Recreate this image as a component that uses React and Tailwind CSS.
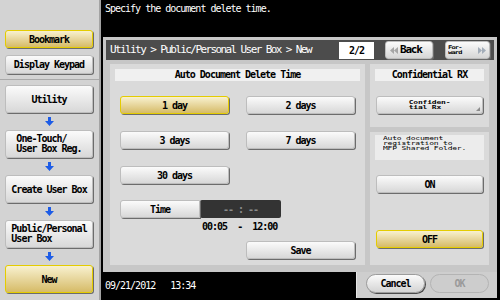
const yellowCls = "border border-[#e4cc00] bg-linear-to-b from-[#f8f1cf] to-[#d6bb66]";
const greyCls = "border border-[#bdbdbd] bg-linear-to-b from-[#fbfbfb] to-[#d8d8d8]";

function Btn({ children, className = "", yellow = false }) {
  return (
    <div
      className={`relative flex items-center justify-center rounded-[3px] font-bold text-black shadow-[1px_1px_0_#6c6c6c] ${
        yellow ? yellowCls : greyCls
      } ${className}`}
    >
      {children}
    </div>
  );
}

function DownArrow() {
  return (
    <div className="flex h-[17px] items-center justify-center">
      <svg width="9" height="9" viewBox="0 0 9 9">
        <path d="M3 0h3v4h3L4.5 9 0 4h3z" fill="#1d5ce6" />
      </svg>
    </div>
  );
}

function DoubleTri({ dir = "left", color }) {
  const d =
    dir === "left"
      ? "M0 3.5 4 0v7zM4 3.5 8 0v7z"
      : "M8 3.5 4 0v7zM4 3.5 0 0v7z";
  return (
    <svg width="8" height="7" viewBox="0 0 8 7">
      <path d={d} fill={color} />
    </svg>
  );
}

function Squashed({ children, className = "" }) {
  return (
    <span className={`inline-block origin-center scale-y-[0.72] whitespace-pre text-left ${className}`}>
      {children}
    </span>
  );
}

export default function App() {
  return (
    <div className="flex h-[300px] w-[500px] overflow-hidden font-['DejaVu_Sans_Mono',monospace] text-[10px] tracking-[-1px] text-black">
      {/* left column */}
      <div className="flex h-full w-[101px] flex-col border-r-2 border-[#a3a3a3] bg-[#d3d3d3]">
        <div className="flex h-[80px] flex-col gap-[7px] border-b border-[#a9a9a9] pl-[5px] pr-[6px] pt-[30px]">
          <Btn yellow className="h-[18px]">Bookmark</Btn>
          <Btn className="h-[19px]">Display Keypad</Btn>
        </div>
        <div className="flex flex-col pl-[5px] pr-[6px] pt-[5px]">
          <Btn className="h-[28px]">Utility</Btn>
          <DownArrow />
          <Btn className="h-[28px] leading-[10px]">
            <span className="inline-block text-left">One-Touch/<br />User Box Reg.</span>
          </Btn>
          <DownArrow />
          <Btn className="h-[28px]">Create User Box</Btn>
          <DownArrow />
          <Btn className="h-[28px] leading-[10px]">
            <span className="inline-block text-left">Public/Personal<br />User Box</span>
          </Btn>
          <DownArrow />
          <Btn yellow className="h-[28px]">New</Btn>
        </div>
      </div>

      {/* main */}
      <div className="flex flex-1 flex-col bg-black">
        <div className="h-[37px] pl-[4px] pt-[3px] leading-[12px] text-white">
          Specify the document delete time.
        </div>

        <div className="ml-[2px] mr-[3px] flex h-[235px] flex-col bg-[#c7c7c7] p-[3px]">
          {/* header */}
          <div className="flex h-[20px] items-center bg-[#4c4c4c] pr-[4px]">
            <div className="flex-1 pl-[4px] text-[11px] tracking-[-1.6px] text-white">
              Utility &gt; Public/Personal User Box &gt; New
            </div>
            <div className="flex h-[17px] w-[35px] items-center justify-center bg-white font-bold">2/2</div>
            <div className="ml-[11px] flex h-[18px] w-[48px] items-center gap-[2px] rounded-[3px] border border-[#bdbdbd] bg-linear-to-b from-[#fbfbfb] to-[#d6d6d6] pl-[4px] text-[11px] font-bold tracking-[-1.2px] shadow-[1px_1px_0_#6c6c6c]">
              <DoubleTri dir="left" color="#a6a6a6" />
              Back
            </div>
            <div className="ml-[12px] flex h-[18px] w-[45px] items-center justify-between rounded-[3px] border border-[#bdbdbd] bg-linear-to-b from-[#fbfbfb] to-[#d6d6d6] pl-[2px] pr-[3px] shadow-[1px_1px_0_#6c6c6c]">
              <Squashed className="text-[7px] leading-[6px] tracking-[-0.8px] font-bold">{"For-\nward"}</Squashed>
              <DoubleTri dir="right" color="#a3adb9" />
            </div>
          </div>

          {/* body */}
          <div className="flex flex-1 gap-[5px] pb-[4px] pl-[4px] pr-[5px] pt-[4px]">
            <div className="flex w-[255px] flex-col bg-[#dadada] px-[5px] pt-[5px]">
              <div className="h-[12px] bg-[#f0f0f0] text-center font-bold leading-[12px]">
                Auto Document Delete Time
              </div>
              <div className="mt-[15px] grid grid-cols-2 gap-x-[17px] gap-y-[17px] px-[5px]">
                <Btn yellow className="h-[18px]">1 day</Btn>
                <Btn className="h-[18px]">2 days</Btn>
                <Btn className="h-[18px]">3 days</Btn>
                <Btn className="h-[18px]">7 days</Btn>
                <Btn className="h-[18px]">30 days</Btn>
              </div>
              <div className="mt-[16px] flex px-[5px]">
                <Btn className="h-[18px] w-[80px] rounded-r-none">Time</Btn>
                <div className="flex h-[18px] w-[81px] items-center justify-center rounded-[2px] bg-[#333333] font-bold text-[#8a8a8a] whitespace-pre">
                  {"-- : --"}
                </div>
              </div>
              <div className="ml-[87px] mt-[3px] h-[12px] whitespace-pre font-bold leading-[12px]">
                {"00:05  -  12:00"}
              </div>
              <div className="mt-[8px] grid grid-cols-2 gap-x-[17px] px-[5px]">
                <div />
                <Btn className="h-[18px]">Save</Btn>
              </div>
            </div>

            <div className="flex w-[119px] flex-col gap-[5px]">
              <div className="h-[63px] bg-[#dadada] px-[5px] pt-[5px]">
                <div className="h-[12px] bg-[#f0f0f0] text-center font-bold leading-[12px]">
                  Confidential RX
                </div>
                <Btn className="mx-[1px] mt-[15px] h-[18px]">
                  <Squashed className="text-[8px] leading-[6px] tracking-[-0.2px]">{"Confiden-\ntial Rx"}</Squashed>
                  <span className="absolute bottom-[2px] right-[2px] h-0 w-0 border-b-[4px] border-l-[4px] border-b-[#8c8c8c] border-l-transparent" />
                </Btn>
              </div>
              <div className="flex flex-1 flex-col bg-[#dadada] px-[5px] pt-[3px]">
                <div className="h-[25px] bg-[#ececec] pl-[8px] pt-[1px]">
                  <Squashed className="origin-top-left text-[8px] leading-[7px] tracking-[-0.2px]">
                    {"Auto document\nregistration to\nMFP Shared Folder."}
                  </Squashed>
                </div>
                <Btn className="mx-[1px] mt-[15px] h-[18px]">ON</Btn>
                <Btn yellow className="mx-[1px] mt-[37px] h-[18px]">OFF</Btn>
              </div>
            </div>
          </div>
        </div>

        {/* bottom */}
        <div className="flex h-[28px]">
          <div className="flex-1 whitespace-pre pl-[4px] pt-[8px] leading-[12px] text-white">
            {"09/21/2012   13:34"}
          </div>
          <div className="mb-[2px] mr-[3px] flex w-[141px] gap-[5px] border-l border-[#e6e6e6] bg-[#cecece] pl-[9px] pt-[2px]">
            <div className="flex h-[19px] w-[59px] items-center justify-center rounded-full border border-[#9c9c9c] bg-linear-to-b from-[#fbfbfb] to-[#d4d4d4] font-bold shadow-[1px_1px_0_#4a4a4a]">
              Cancel
            </div>
            <div className="flex h-[19px] w-[59px] items-center justify-center rounded-full border border-[#b4b4b4] bg-[#cdcdcd] font-bold text-[#9a9a9a]">
              OK
            </div>
          </div>
        </div>
      </div>
    </div>
  );
}
